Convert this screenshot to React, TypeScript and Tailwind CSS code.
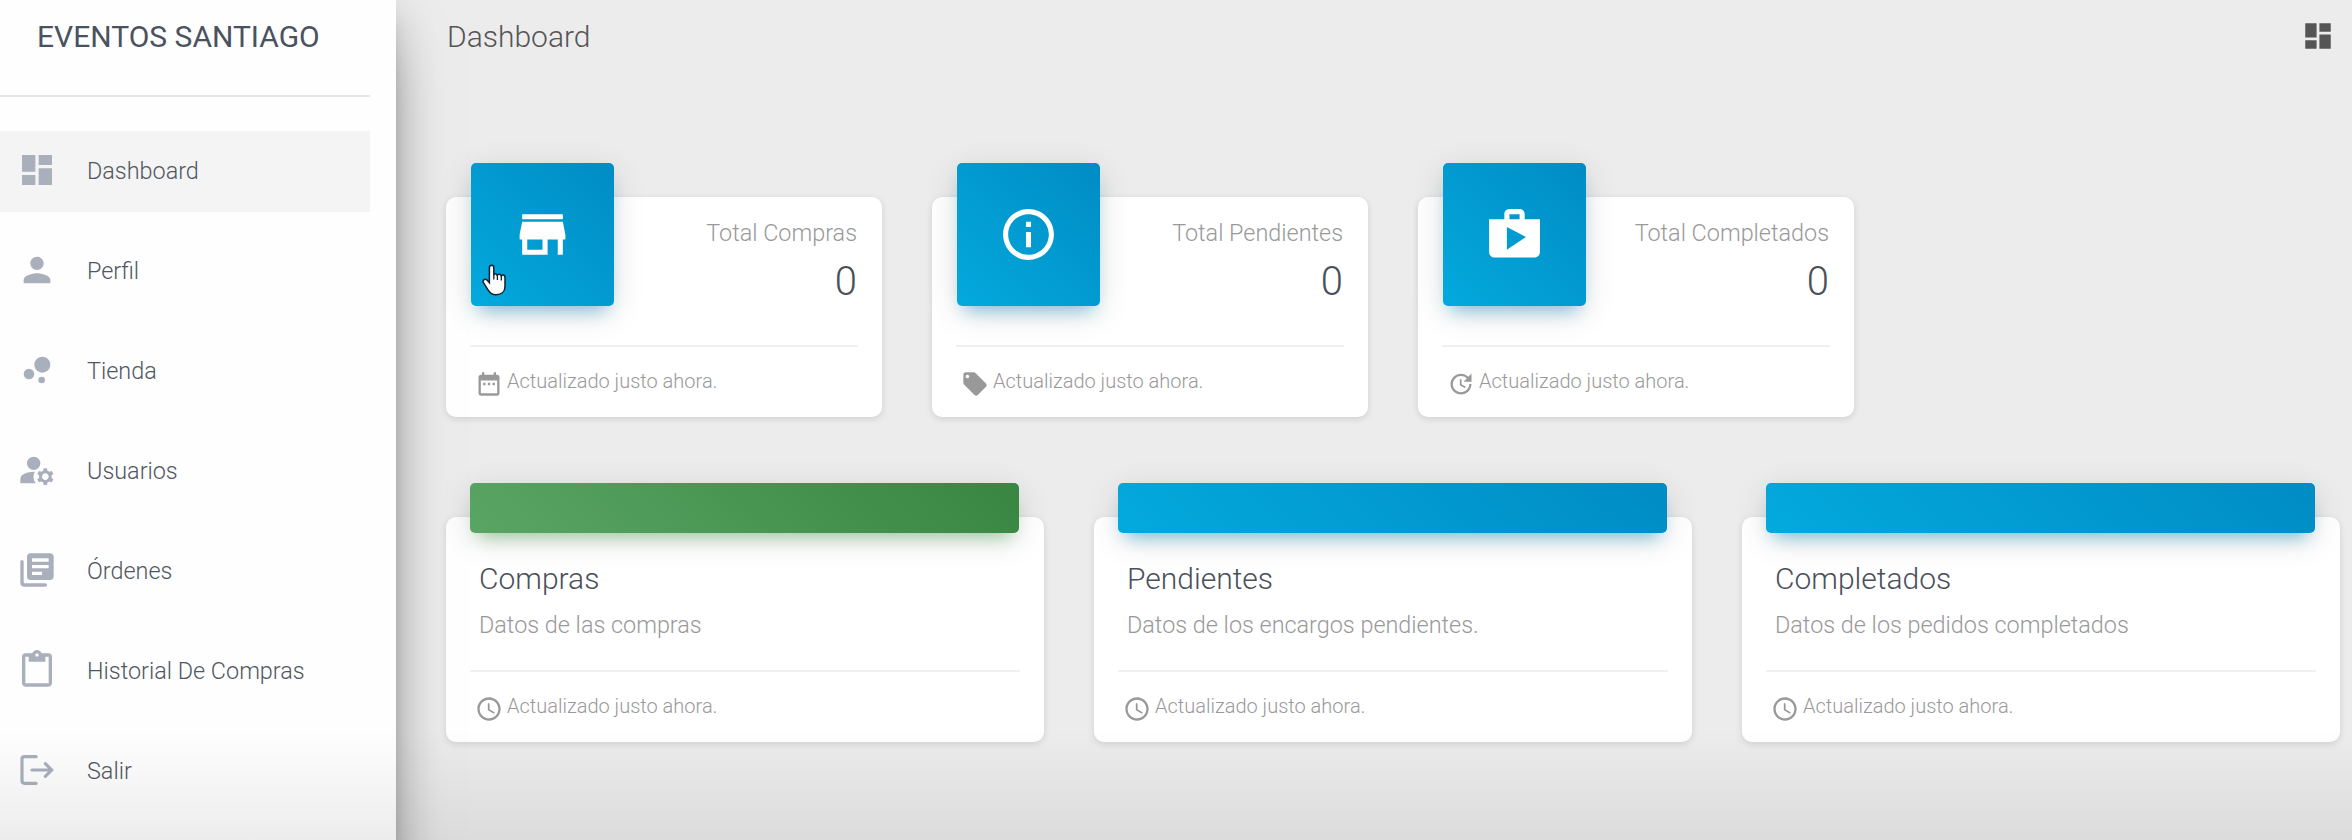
import type { ComponentType, ReactNode } from "react";
import {
  MdAccessTime,
  MdBubbleChart,
  MdDashboard,
  MdDateRange,
  MdInfoOutline,
  MdLocalOffer,
  MdManageAccounts,
  MdPerson,
  MdShop,
  MdUpdate,
} from "react-icons/md";

type Icon = ComponentType<{ className?: string }>;

function LibraryIcon({ className }: { className?: string }) {
  return (
    <svg viewBox="0 0 24 24" fill="currentColor" className={className}>
      <path d="M3 6c-.55 0-1 .45-1 1v13c0 1.100.9 2 2 2h13c.55 0 1-.45 1-1s-.45-1-1-1H5c-.55 0-1-.45-1-1V7c0-.55-.45-1-1-1z" />
      <path d="M20 2H8c-1.100 0-2 .9-2 2v12c0 1.100.9 2 2 2h12c1.100 0 2-.9 2-2V4c0-1.100-.9-2-2-2zm-1 9H9V9h10v2zm-4 4H9v-2h6v2zm4-8H9V5h10v2z" />
    </svg>
  );
}

function PasteIcon({ className }: { className?: string }) {
  return (
    <svg viewBox="0 0 24 24" fill="currentColor" className={className}>
      <path d="M19 2h-4.180C14.400.84 13.300 0 12 0S9.600.84 9.180 2H5c-1.100 0-2 .9-2 2v16c0 1.100.9 2 2 2h14c1.100 0 2-.9 2-2V4c0-1.100-.9-2-2-2zm-7 0c.55 0 1 .45 1 1s-.45 1-1 1-1-.45-1-1 .45-1 1-1zm7 18H5V4h2v3h10V4h2v16z" />
    </svg>
  );
}

function LogoutIcon({ className }: { className?: string }) {
  return (
    <svg
      viewBox="0 0 24 24"
      fill="none"
      stroke="currentColor"
      strokeWidth="1.900"
      strokeLinecap="round"
      className={className}
    >
      <path d="M11.500 4H4.500Q3 4 3 5.500V18.500Q3 20 4.500 20H11.500" />
      <path d="M9 12H20.500M17 8.200L20.800 12L17 15.800" />
    </svg>
  );
}

function StoreIcon({ className }: { className?: string }) {
  return (
    <svg viewBox="0 0 24 24" fill="currentColor" className={className}>
      <path d="M20 4H4v2h16V4zm1 10v-2l-1-5H4l-1 5v2h1v6h10v-6h4v6h2v-6h1zm-9 4H6v-4h6v4z" />
    </svg>
  );
}

const links: { label: string; Icon: Icon }[] = [
  { label: "Dashboard", Icon: MdDashboard },
  { label: "Perfil", Icon: MdPerson },
  { label: "Tienda", Icon: MdBubbleChart },
  { label: "Usuarios", Icon: MdManageAccounts },
  { label: "Órdenes", Icon: LibraryIcon },
  { label: "Historial De Compras", Icon: PasteIcon },
  { label: "Salir", Icon: LogoutIcon },
];

const stats: { label: string; value: number; Icon: Icon; FootIcon: Icon }[] = [
  { label: "Total Compras", value: 0, Icon: StoreIcon, FootIcon: MdDateRange },
  { label: "Total Pendientes", value: 0, Icon: MdInfoOutline, FootIcon: MdLocalOffer },
  { label: "Total Completados", value: 0, Icon: MdShop, FootIcon: MdUpdate },
];

const charts = [
  { title: "Compras", text: "Datos de las compras", green: true },
  { title: "Pendientes", text: "Datos de los encargos pendientes.", green: false },
  { title: "Completados", text: "Datos de los pedidos completados", green: false },
];

function Sidebar() {
  return (
    <aside className="relative z-10 h-[940px] w-[396px] shrink-0 bg-[#fefefe] shadow-[0_27px_63px_-20px_rgba(0,0,0,0.56),0_7px_42px_0_rgba(0,0,0,0.12),0_13px_17px_-8px_rgba(0,0,0,0.2)]">
      <div className="flex h-[97px] w-[370px] items-start border-b-2 border-[#e6e6e6] pt-[17px] pl-[37px]">
        <span className="text-[30px] leading-[40px] whitespace-nowrap text-[#4a5260]">EVENTOS SANTIAGO</span>
      </div>
      <nav className="mt-[34px] flex flex-col gap-[19px]">
        {links.map(({ label, Icon }, i) => (
          <a
            key={label}
            className={`flex h-[81px] w-[370px] items-center pl-[17px] ${i === 0 ? "bg-[#f4f4f4]" : ""}`}
          >
            <Icon className="mb-[3px] size-10 text-[#a9afbb]" />
            <span className="ml-[30px] text-[23.4px] font-light whitespace-nowrap text-[#50565f]">{label}</span>
          </a>
        ))}
      </nav>
    </aside>
  );
}

function Footer({ Icon }: { Icon: Icon }) {
  return (
    <div className="mx-6 flex items-start border-t-2 border-[#f0f0f0] pt-[20px] pl-[5px] text-[#999999]">
      <Icon className="mt-[3px] size-7" />
      <span className="ml-[4px] text-[20px] leading-[28px] font-light">Actualizado justo ahora.</span>
    </div>
  );
}

function Card({ className, children }: { className: string; children: ReactNode }) {
  return (
    <div className={`flex flex-col rounded-[10px] bg-white shadow-[0_2px_7px_0_rgba(0,0,0,0.12)] ${className}`}>
      {children}
    </div>
  );
}

function HandCursor() {
  return (
    <svg viewBox="0 0 24 32" className="absolute top-[101px] left-[11px] h-8 w-6">
      <path
        d="M9.8 1.2C8.3 1.2 7.4 2.2 7.4 3.6v15.2l-2.2-2.6c-1-1.1-2.4-1.2-3.4-.4-.9.8-.9 2-.2 3.1l4.6 7.3c1.5 2.6 3.7 4.6 7.8 4.6 5.4 0 9-3.2 9-8.6v-8.8c0-3-3.4-3-3.7-.8 0-3-3.7-3.2-4-.8-.3-2.6-3.3-2.6-3.5-.6V3.6c0-1.4-.8-2.4-2-2.4z"
        fill="#fff"
        stroke="#12222e"
        strokeWidth="1.5"
      />
      <path d="M11.8 10v5.5M15.4 11v5M19.3 12v4.5" stroke="#12222e" strokeWidth="1.3" />
    </svg>
  );
}

export default function App() {
  return (
    <div className="relative flex h-[840px] w-[2352px] overflow-hidden bg-[#ececec] font-['Roboto',sans-serif]">
      <Sidebar />
      <main className="flex flex-1 flex-col pl-[50px]">
        <header className="flex h-[72px] items-center justify-between pr-[17px] pl-px">
          <h1 className="text-[30px] font-light text-[#555555]">Dashboard</h1>
          <MdDashboard className="size-[34px] text-[#555555]" />
        </header>
        <section className="mt-[125px] flex gap-[50px]">
          {stats.map(({ label, value, Icon, FootIcon }, i) => (
            <Card key={label} className="h-[220px] w-[436px]">
              <div className="flex h-[148px] shrink-0 justify-between pr-[25px] pl-6">
                <div className="relative -mt-[34px] ml-[0.5px] flex h-[143px] w-[143px] items-center justify-center rounded-[5px] bg-linear-[45deg] from-[#03a9dd] to-[#008cc4] shadow-[0_7px_33px_0_rgba(0,0,0,0.12),0_12px_17px_-8px_rgba(0,150,200,0.45)]">
                  <Icon className="mb-px size-[61px] text-white" />
                  {i === 0 && <HandCursor />}
                </div>
                <div className="flex flex-col items-end pt-[18px]">
                  <span className="text-[23.4px] leading-[36px] font-light text-[#999999]">{label}</span>
                  <span className="mt-[9px] text-[40px] leading-[44px] font-light text-[#4a505a]">{value}</span>
                </div>
              </div>
              <Footer Icon={FootIcon} />
            </Card>
          ))}
        </section>
        <section className="mt-[100px] flex gap-[50px]">
          {charts.map(({ title, text, green }) => (
            <Card key={title} className="h-[225px] w-[598px] shrink-0">
              <div
                className={`mr-[25px] ml-6 -mt-[34px] h-[50px] shrink-0 rounded-[5px] bg-linear-[45deg] ${
                  green
                    ? "from-[#5aa564] to-[#388641] shadow-[0_7px_33px_0_rgba(0,0,0,0.12),0_12px_17px_-8px_rgba(76,175,80,0.45)]"
                    : "from-[#03a9dd] to-[#008cc4] shadow-[0_7px_33px_0_rgba(0,0,0,0.12),0_12px_17px_-8px_rgba(0,150,200,0.45)]"
                }`}
              />
              <div className="flex h-[137px] shrink-0 flex-col pt-[26px] pl-[33px]">
                <h4 className="text-[30px] leading-[40px] font-light text-[#4a505a]">{title}</h4>
                <p className="mt-[8px] text-[23.4px] leading-[36px] font-light text-[#999999]">{text}</p>
              </div>
              <Footer Icon={MdAccessTime} />
            </Card>
          ))}
        </section>
      </main>
      <div className="pointer-events-none absolute inset-x-0 bottom-0 z-20 h-[110px] bg-linear-to-b from-black/0 to-black/7" />
    </div>
  );
}
